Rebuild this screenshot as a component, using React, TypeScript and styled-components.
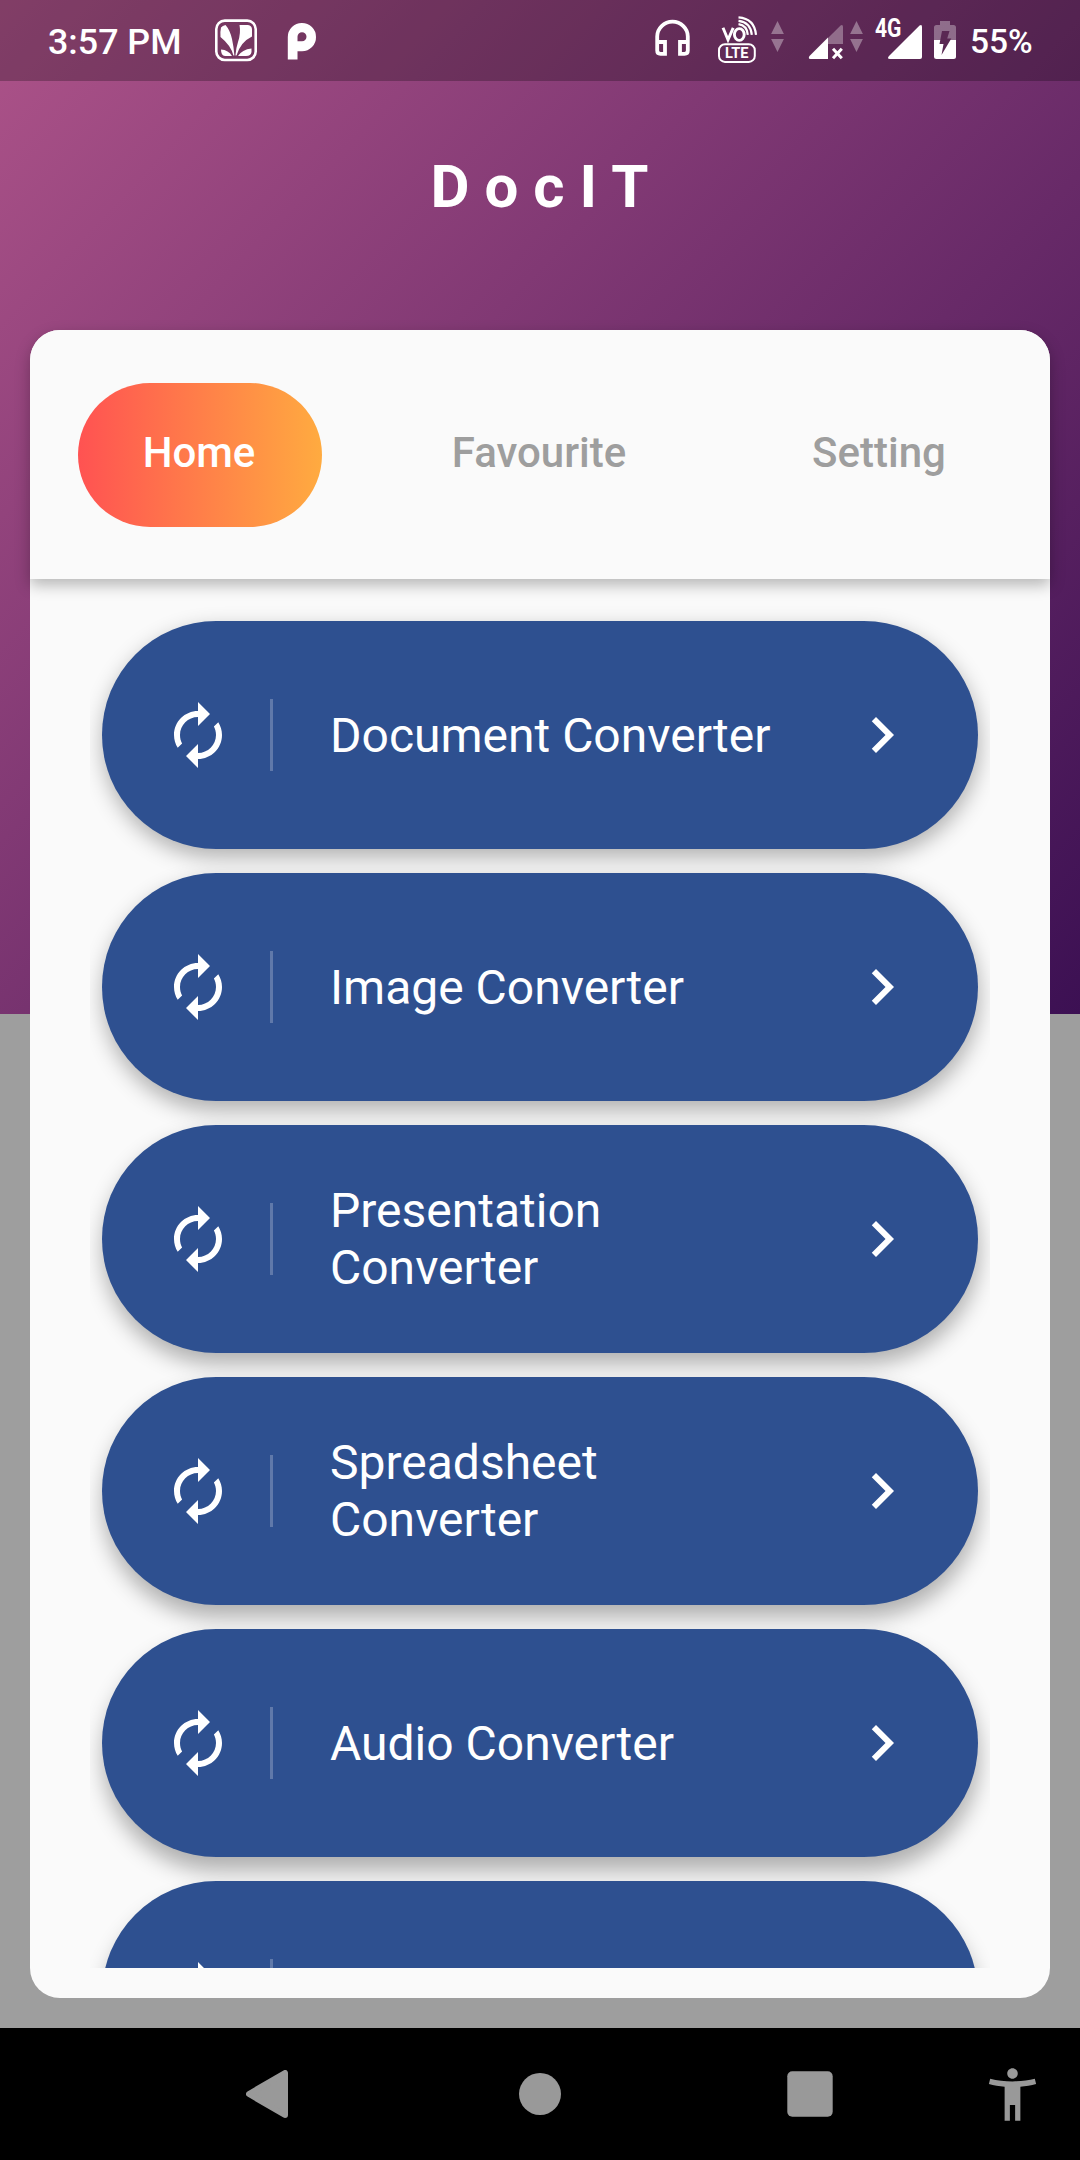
import React from "react";
import styled, { createGlobalStyle } from "styled-components";

const GlobalStyle = createGlobalStyle`
  *, *::before, *::after { box-sizing: border-box; }
  body { margin: 0; background: #000; }
`;

const Screen = styled.div`
  display: flex;
  flex-direction: column;
  width: 1080px;
  height: 2160px;
  overflow: hidden;
  font-family: Roboto, "Noto Sans", sans-serif;
  background:
    linear-gradient(133.2deg, #ad5389 0%, #3c1053 100%) 0 0 / 1080px 1014px no-repeat,
    #9e9e9e;
`;

const StatusBar = styled.header`
  display: flex;
  flex: none;
  height: 81px;
  padding: 0 48px;
  background: rgba(0, 0, 0, 0.25);
  color: #fff;
  font-weight: 500;
  white-space: nowrap;
`;

const Clock = styled.span`
  width: 167px;
  font-size: 35.8px;
  line-height: 85px;
`;

const Spacer = styled.span`
  flex: 1;
`;

const Glyph = styled.svg<{ $gap?: number }>`
  display: block;
  flex: none;
  height: 81px;
  margin-left: ${(p) => p.$gap ?? 0}px;
`;

const BatteryLevel = styled.span`
  width: 62px;
  margin-left: 13px;
  font-size: 33.5px;
  line-height: 83px;
`;

const TitleBar = styled.div`
  display: flex;
  flex: none;
  justify-content: center;
  height: 249px;
  padding: 71px 0 0 14px;
`;

const Title = styled.h1`
  margin: 0;
  color: #fff;
  font-size: 60px;
  font-weight: 700;
  line-height: 70px;
  letter-spacing: 15px;
`;

const Card = styled.main`
  display: flex;
  flex: 1;
  flex-direction: column;
  min-height: 0;
  margin: 0 30px 30px;
  padding-bottom: 30px;
  border-radius: 30px;
  background: #fafafa;
`;

const Tabs = styled.nav`
  position: relative;
  z-index: 1;
  display: grid;
  flex: none;
  grid-template-columns: repeat(3, 1fr);
  align-items: center;
  height: 249px;
  border-radius: 30px 30px 0 0;
  background: #fafafa;
  box-shadow: 0 6px 15px rgba(0, 0, 0, 0.28);
`;

const Tab = styled.button<{ $active?: boolean }>`
  height: 144px;
  margin: 0 48px;
  padding: 0 2px 5px 0;
  border: 0;
  border-radius: 72px;
  background: ${(p) => (p.$active ? "linear-gradient(90deg, #ff5252, #ffab40)" : "none")};
  color: ${(p) => (p.$active ? "#fff" : "#9e9e9e")};
  font: 500 42px/49px Roboto, "Noto Sans", sans-serif;
`;

const List = styled.section`
  display: flex;
  flex: 1;
  flex-direction: column;
  gap: 24px;
  min-height: 0;
  margin: 0 60px;
  padding: 42px 12px 0;
  overflow: hidden;
`;

const Tile = styled.button<{ $drop: number }>`
  display: flex;
  flex: none;
  align-items: center;
  height: 228px;
  padding: 0 60px;
  border: 0;
  border-radius: 114px;
  background: #2e5090;
  box-shadow: 1px ${(p) => p.$drop}px 21px rgba(0, 0, 0, 0.3);
  color: #fff;
  text-align: left;
`;

const Leading = styled.span`
  display: flex;
  align-items: center;
  width: 111px;
  height: 72px;
  border-right: 3px solid rgba(255, 255, 255, 0.24);
`;

const Label = styled.span`
  flex: 1;
  margin: 0 48px 0 57px;
  font: 400 48px/57px Roboto, "Noto Sans", sans-serif;
`;

const NavBar = styled.footer`
  display: grid;
  flex: none;
  grid-template-columns: 135px 270px 270px 270px 135px;
  place-items: center;
  height: 132px;
  background: #000;
  color: #999;
`;

const BackSlot = styled.span`
  display: flex;
  grid-column: 1 / 3;
  width: 42px;
  margin-left: 129px;
`;

const NavIcon = styled.svg`
  display: block;
`;

const Renew = () => (
  <svg width="72" height="72" viewBox="0 0 24 24" fill="currentColor">
    <path d="M12 6v3l4-4-4-4v3c-4.42 0-8 3.58-8 8 0 1.57.46 3.03 1.24 4.26L6.7 14.8c-.45-.83-.7-1.79-.7-2.8 0-3.31 2.69-6 6-6zm6.76 1.74L17.3 9.2c.44.84.7 1.79.7 2.8 0 3.31-2.69 6-6 6v-3l-4 4 4 4v-3c4.42 0 8-3.58 8-8 0-1.57-.46-3.03-1.24-4.26z" />
  </svg>
);

const Chevron = () => (
  <svg width="72" height="72" viewBox="0 0 24 24" fill="currentColor">
    <path d="M8.59 16.59L13.17 12 8.59 7.41 10 6l6 6-6 6-1.41-1.41z" />
  </svg>
);

const MusicGlyph = () => (
  <Glyph width="42" viewBox="0 0 42 81">
    <rect x="1.3" y="20.6" width="39.4" height="39.4" rx="8.5" fill="none" stroke="#fff" strokeWidth="2.6" />
    <g fill="#fff">
      <path d="M6 27.5Q7.5 25.5 10.5 25Q15 30 17 39Q18.8 47 19.4 55.5L18.4 55.5Q16 45.5 5.5 37Q5 32 6 27.5Z" />
      <path d="M24.5 25H33Q37 25.5 37 29.5V36.5Q25.5 42 21.5 55.5L20.4 55.5Q21 48 23 42Q26 33 24.5 25Z" />
      <path d="M6 49.5Q13.5 50 17 56H10Q6 55.5 6 49.5Z" />
      <path d="M36.5 48.5V52Q36 56 31 56H23Q27 49.5 36.5 48.5Z" />
    </g>
  </Glyph>
);

const PGlyph = () => (
  <Glyph $gap={30} width="30" viewBox="0 0 30 81">
    <path
      fill="#fff"
      fillRule="evenodd"
      d="M.8 37A14 14 0 0 1 15 23A14 14 0 0 1 29 37A14 14 0 0 1 15 51.3H10.5V59.5H.8ZM15 32.2A4.5 4.5 0 0 0 10.5 36.7V41.2H15A4.5 4.5 0 0 0 15 32.2Z"
    />
  </Glyph>
);

const HeadsetGlyph = () => (
  <Glyph width="36" viewBox="0 0 36 81">
    <path
      d="M2.2 42V36.5A15.3 14.8 0 0 1 32.8 36.5V50.5Q32.8 53.8 29.5 53.8H25V42H32.8M2.2 42H10V53.8H5.5Q2.2 53.8 2.2 50.5V42"
      fill="none"
      stroke="#fff"
      strokeWidth="3.8"
    />
  </Glyph>
);

const VolteGlyph = () => (
  <Glyph $gap={26} width="42" viewBox="0 0 42 81">
    <g fill="none" stroke="#fff">
      <path d="M6 27.8L11 39.8L16.2 27.8" strokeWidth="2.9" />
      <ellipse cx="22.300" cy="34.500" rx="4.900" ry="5.900" strokeWidth="2.900" />
      <path d="M21.5 24.2Q30 25.5 30.8 34.8" strokeWidth="2.2" />
      <path d="M21.5 20.8Q33.5 22 34.8 34.8" strokeWidth="2.2" />
      <path d="M21.5 17.300Q37.500 18.500 39 34.800" strokeWidth="2.200" />
      <rect x="2" y="44.300" width="35.800" height="17.600" rx="6" strokeWidth="2" />
    </g>
    <text x="8" y="58.300" fill="#fff" fontFamily="Roboto, sans-serif" fontSize="15.500" fontWeight="700" textLength="23.500" lengthAdjust="spacingAndGlyphs">
      LTE
    </text>
  </Glyph>
);

const DataArrows = ({ gap }: { gap: number }) => (
  <Glyph $gap={gap} width="13" viewBox="0 0 13 81">
    <path d="M6.5 21L12.9 34H.1ZM.1 39H12.9L6.5 52Z" fill="#fff" fillOpacity=".35" />
  </Glyph>
);

const WeakSignal = () => (
  <Glyph $gap={24} width="36" viewBox="0 0 36 81">
    <path d="M20 38L32.6 25.4Q35 24 35 27V44H20Z" fill="#fff" fillOpacity=".32" />
    <path d="M20 37.5V59H2.5Q-.3 59 1.5 56Z" fill="#fff" />
    <path d="M25 48.8L33.800 58.200M33.800 48.800L25 58.200" stroke="#fff" strokeWidth="3" />
  </Glyph>
);

const FullSignal = () => (
  <Glyph $gap={11} width="49" viewBox="0 0 49 81">
    <text x="1" y="37" fill="#fff" fontFamily="Roboto, sans-serif" fontSize="25" fontWeight="700" textLength="26.5" lengthAdjust="spacingAndGlyphs">
      4G
    </text>
    <path d="M45.3 25.8Q48 23.8 48 27V57Q48 59 46 59H16Q12.5 59 15 56Z" fill="#fff" />
  </Glyph>
);

const Battery = () => (
  <Glyph $gap={10} width="24" viewBox="0 0 24 81">
    <path d="M7 21H17V25H20.5Q23 25 23 27.5V40H1V27.5Q1 25 3.5 25H7Z" fill="#fff" fillOpacity=".33" />
    <path d="M1 40H23V56.5Q23 59 20.5 59H3.5Q1 59 1 56.5Z" fill="#fff" />
    <path d="M9 31H16.5L14.2 38.5H18.3L8.5 55L10.5 44H6.5Z" fill="#5a2853" />
  </Glyph>
);

const converters = [
  "Document Converter",
  "Image Converter",
  "Presentation Converter",
  "Spreadsheet Converter",
  "Audio Converter",
  "",
];

export default function App() {
  return (
    <Screen>
      <GlobalStyle />
      <StatusBar>
        <Clock>3:57 PM</Clock>
        <MusicGlyph />
        <PGlyph />
        <Spacer />
        <HeadsetGlyph />
        <VolteGlyph />
        <DataArrows gap={12} />
        <WeakSignal />
        <DataArrows gap={6} />
        <FullSignal />
        <Battery />
        <BatteryLevel>55%</BatteryLevel>
      </StatusBar>
      <TitleBar>
        <Title>DocIT</Title>
      </TitleBar>
      <Card>
        <Tabs>
          <Tab $active>Home</Tab>
          <Tab>Favourite</Tab>
          <Tab>Setting</Tab>
        </Tabs>
        <List>
          {converters.map((name, i) => (
            <Tile key={i} $drop={8 + i * 1.5}>
              <Leading>
                <Renew />
              </Leading>
              <Label>{name}</Label>
              <Chevron />
            </Tile>
          ))}
        </List>
      </Card>
      <NavBar>
        <BackSlot>
          <NavIcon width="42" height="48" viewBox="0 0 42 48">
            <path d="M3 24L39 3V45Z" fill="currentColor" stroke="currentColor" strokeWidth="6" strokeLinejoin="round" />
          </NavIcon>
        </BackSlot>
        <NavIcon width="42" height="42" viewBox="0 0 42 42">
          <circle cx="21" cy="21" r="21" fill="currentColor" />
        </NavIcon>
        <NavIcon width="46" height="46" viewBox="0 0 46 46">
          <rect x=".3" y=".3" width="45.4" height="45.4" rx="5" fill="currentColor" />
        </NavIcon>
        <NavIcon width="63" height="63" viewBox="0 0 24 24" fill="currentColor">
          <path d="M20.5 6c-2.61.7-5.67 1-8.5 1s-5.89-.3-8.5-1L3 8c1.86.5 4 .83 6 1v13h2v-6h2v6h2V9c2-.17 4.14-.5 6-1l-.5-2zM12 6c1.1 0 2-.9 2-2s-.9-2-2-2-2 .9-2 2 .9 2 2 2z" />
        </NavIcon>
      </NavBar>
    </Screen>
  );
}
